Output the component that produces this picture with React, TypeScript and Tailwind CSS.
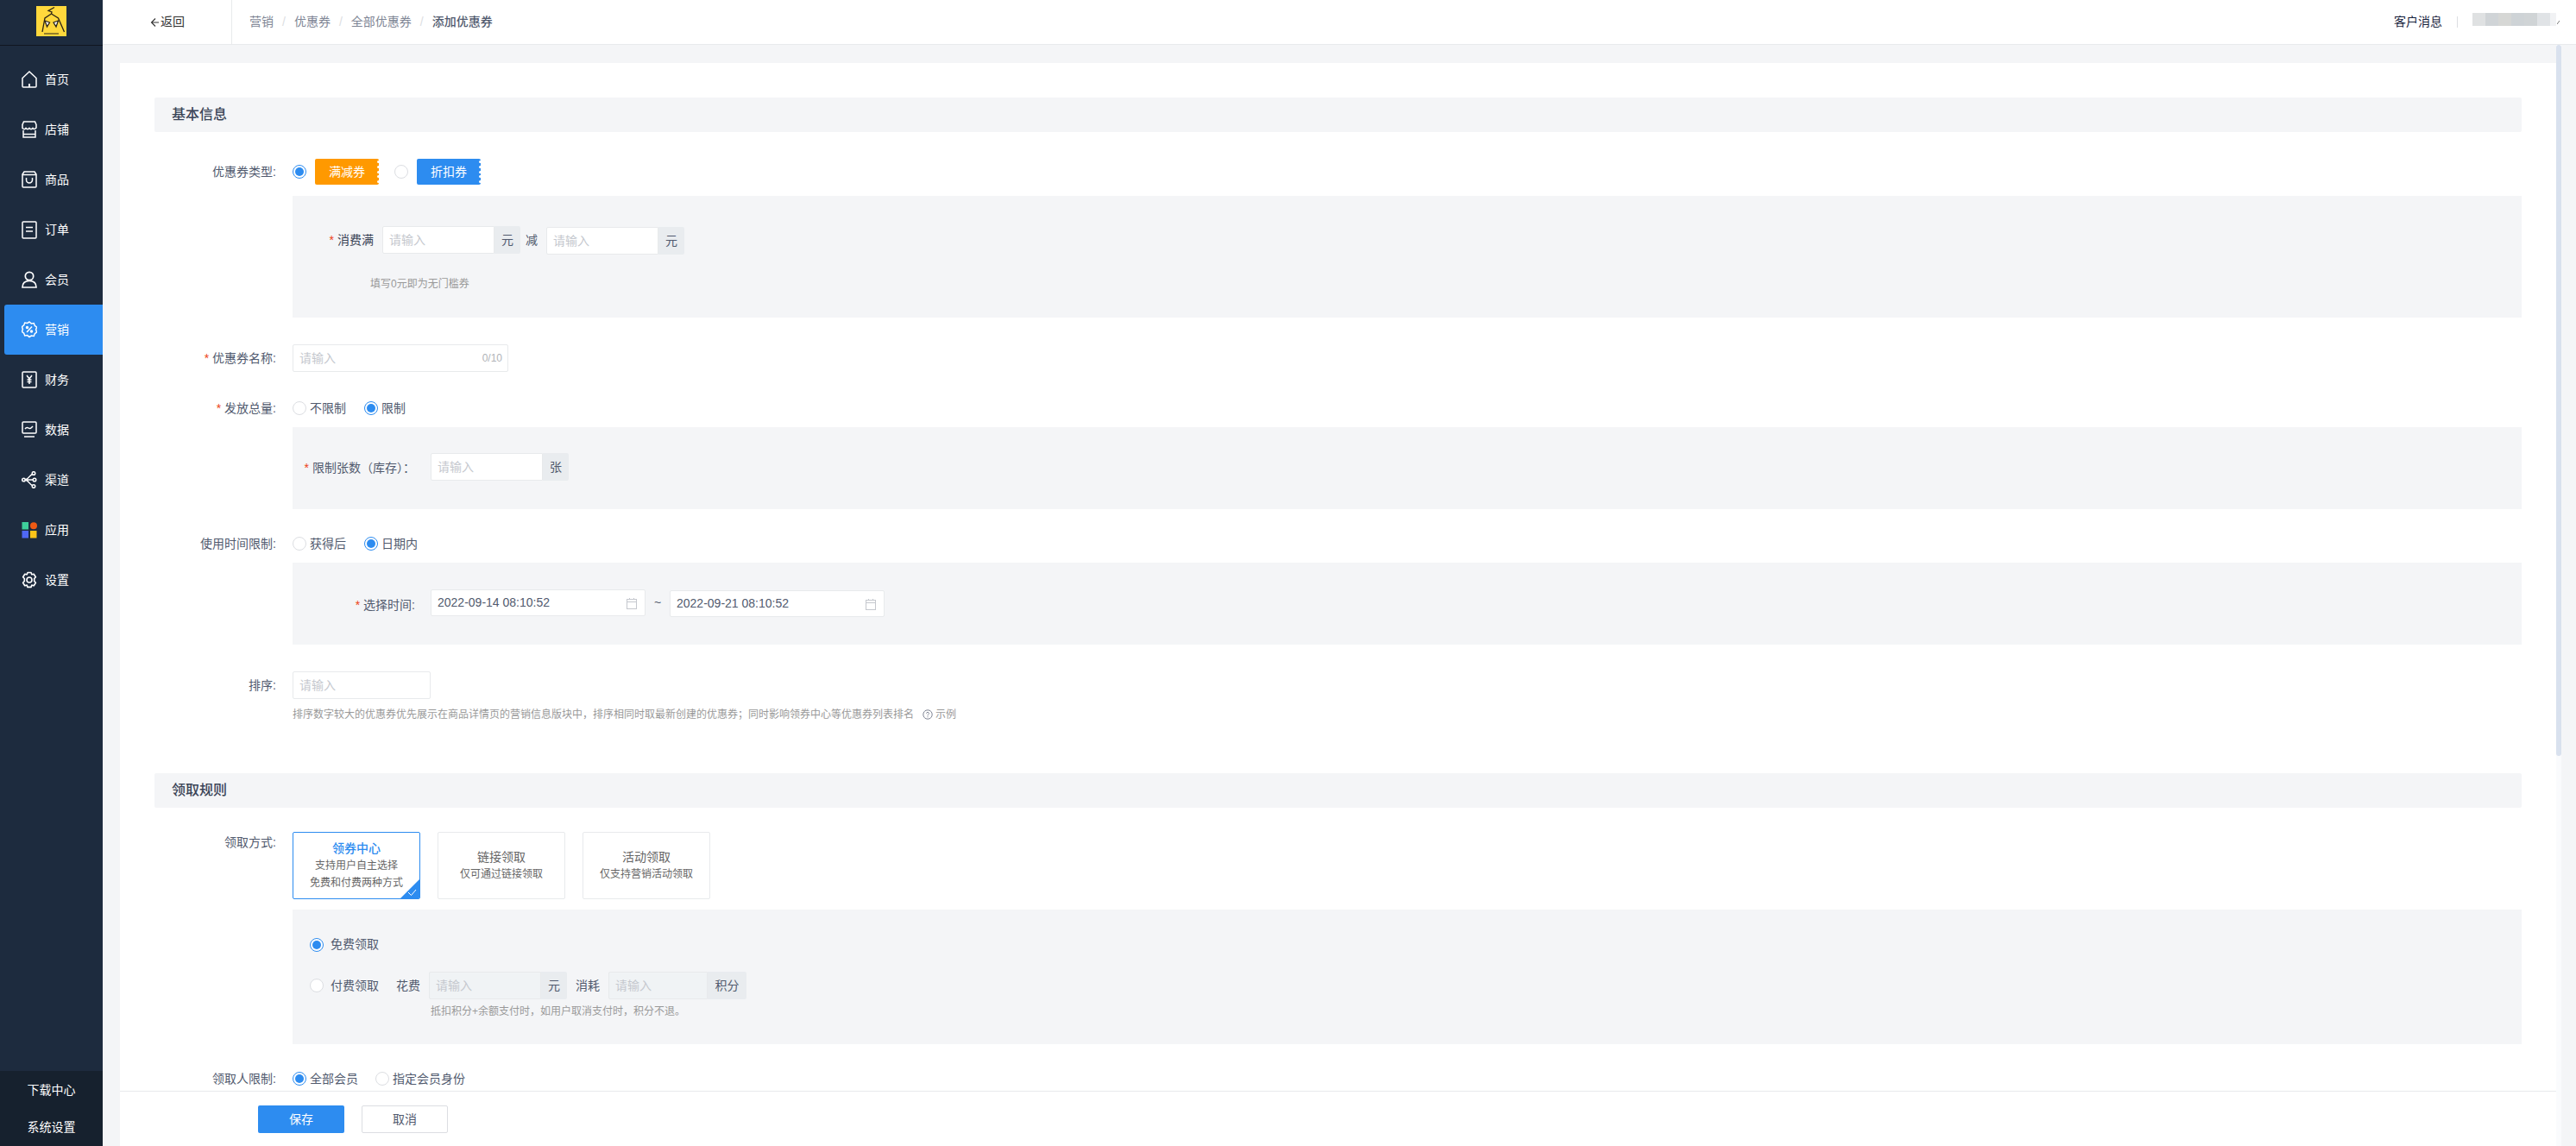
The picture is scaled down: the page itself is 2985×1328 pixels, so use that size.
import type { ReactNode } from 'react';

const font = "font-['Liberation_Sans','Noto_Sans_CJK_SC',sans-serif]";

function HomeIcon() {
  return (
    <svg width="18" height="20" viewBox="0 0 18 20" fill="none" stroke="currentColor" strokeWidth="1.5">
      <path d="M1 8.500 9 1l8 7.500V18a1 1 0 0 1-1 1H2a1 1 0 0 1-1-1z" />
      <path d="M9 15v4" strokeWidth="2" />
    </svg>
  );
}

function ShopIcon() {
  return (
    <svg width="18" height="20" viewBox="0 0 18 20" fill="none" stroke="currentColor" strokeWidth="1.5">
      <path d="M2.500 1h13L17 4.500V8c-1.500 2-3 2-4 .5-1 1.500-3 1.500-4 0-1 1.500-3 1.500-4 0-1 1.500-2.500 1.500-4 0V4.500z" />
      <path d="M2 11v8h14v-8" />
      <path d="M2 15.500h14" />
    </svg>
  );
}

function BagIcon() {
  return (
    <svg width="18" height="20" viewBox="0 0 18 20" fill="none" stroke="currentColor" strokeWidth="1.5">
      <path d="M3 1h12l2 3v14a1 1 0 0 1-1 1H2a1 1 0 0 1-1-1V4z" />
      <path d="M1 4.500h16" />
      <path d="M5.500 8v2.500a3.500 3.500 0 0 0 7 0V8" />
    </svg>
  );
}

function OrderIcon() {
  return (
    <svg width="18" height="21" viewBox="0 0 18 21" fill="none" stroke="currentColor" strokeWidth="1.500">
      <rect x="1" y="1" width="16" height="19" rx="1" />
      <path d="M5 7.500h8M5 12h8" />
    </svg>
  );
}

function UserIcon() {
  return (
    <svg width="18" height="20" viewBox="0 0 18 20" fill="none" stroke="currentColor" strokeWidth="1.700">
      <circle cx="9" cy="6" r="4.700" />
      <path d="M1 19c0-5 3-7.500 8-7.500s8 2.500 8 7.500z" />
    </svg>
  );
}

function PromoIcon() {
  return (
    <svg width="18" height="20" viewBox="0 0 18 20" fill="none" stroke="currentColor" strokeWidth="1.500">
      <path d="M9 1l2.300 1.900 3-.3 1 2.800 2.300 1.800-1 2.800 1 2.800-2.300 1.800-1 2.800-3-.3L9 18.500l-2.300-1.900-3 .3-1-2.800L.4 12.300l1-2.800-1-2.800 2.300-1.800 1-2.800 3 .3z" />
      <path d="M12 6.500l-6 6.500" />
      <circle cx="6.500" cy="7.500" r="1" fill="currentColor" />
      <circle cx="11.500" cy="12" r="1" fill="currentColor" />
    </svg>
  );
}

function FinanceIcon() {
  return (
    <svg width="18" height="20" viewBox="0 0 18 20" fill="none" stroke="currentColor" strokeWidth="1.500">
      <rect x="1" y="1" width="16" height="18" rx="1" />
      <path d="M6 5l3 4 3-4M9 9v6M6.500 10h5M6.500 12.500h5" />
    </svg>
  );
}

function DataIcon() {
  return (
    <svg width="18" height="20" viewBox="0 0 18 20" fill="none" stroke="currentColor" strokeWidth="1.500">
      <rect x="1" y="1" width="16" height="13" rx="1" />
      <path d="M4 9c1.500-2 2.500-2 4-1s2.500 1 5-2" />
      <path d="M3 18h12" />
    </svg>
  );
}

function ChannelIcon() {
  return (
    <svg width="18" height="20" viewBox="0 0 18 20" fill="none" stroke="currentColor" strokeWidth="1.500">
      <circle cx="2.500" cy="10" r="1.800" />
      <circle cx="14" cy="2.500" r="1.800" />
      <circle cx="15" cy="10" r="1.800" />
      <circle cx="14" cy="17.500" r="1.800" />
      <path d="M12.500 3.500C9 5 9 8 4.500 10c4.500 2 4.500 5 8 6.500M4.500 10h8.500" />
    </svg>
  );
}

function AppIcon() {
  return (
    <svg width="18" height="20" viewBox="0 0 18 20">
      <rect x="0.500" y="1" width="7.500" height="8.500" fill="#3ecf9b" />
      <circle cx="14" cy="5.200" r="4" fill="#ee5a14" />
      <rect x="0.500" y="11" width="7.500" height="8.500" fill="#4f68f5" />
      <rect x="10" y="11" width="7.500" height="8.500" fill="#fcc419" />
    </svg>
  );
}

function GearIcon() {
  return (
    <svg width="18" height="20" viewBox="0 0 18 20" fill="none" stroke="currentColor" strokeWidth="1.600">
      <path d="M7 1.500h4l.8 2.300 2.400-.6 2.200 3.500-1.700 1.800v2.900l1.700 1.800-2.200 3.500-2.400-.6-.8 2.300H7l-.8-2.300-2.400.6-2.200-3.500 1.700-1.800V8.500L1.600 6.700l2.200-3.500 2.400.6z" strokeLinejoin="round" />
      <circle cx="9" cy="10" r="3" />
    </svg>
  );
}

function Logo() {
  return (
    <svg width="35" height="35" viewBox="0 0 35 35">
      <rect width="35" height="35" fill="#ffd83c" />
      <g fill="none" stroke="#2b2416" strokeWidth="1.300">
        <path d="M21 1.500 14 5.500l4 1.500-.500 2" />
        <path d="M17.500 9 10 14 7 30" />
        <path d="M17.500 9l8 5 7 16" />
        <path d="M10 17l5.500 2-3 5zM25.500 17l-5.500 2 3 5z" fill="#fff" />
      </g>
      <rect x="9" y="31.500" width="17" height="1" fill="#2b2416" />
    </svg>
  );
}

const navItems: { label: string; icon: ReactNode; active?: boolean }[] = [
  { label: '首页', icon: <HomeIcon /> },
  { label: '店铺', icon: <ShopIcon /> },
  { label: '商品', icon: <BagIcon /> },
  { label: '订单', icon: <OrderIcon /> },
  { label: '会员', icon: <UserIcon /> },
  { label: '营销', icon: <PromoIcon />, active: true },
  { label: '财务', icon: <FinanceIcon /> },
  { label: '数据', icon: <DataIcon /> },
  { label: '渠道', icon: <ChannelIcon /> },
  { label: '应用', icon: <AppIcon /> },
  { label: '设置', icon: <GearIcon /> },
];

function Sidebar() {
  return (
    <aside className="flex h-full w-[119px] shrink-0 flex-col bg-[#1d2b3e] text-white">
      <div className="flex h-[53px] shrink-0 items-start justify-center border-b border-[#10161f] pt-[7px]">
        <Logo />
      </div>
      <nav className="mt-[10px] flex flex-1 flex-col">
        {navItems.map((item) =>
          item.active ? (
            <div key={item.label} className="ml-[5px] flex h-[58px] items-center gap-[9px] rounded-l-[3px] bg-[#2d8cf0] pl-[20px] text-[14px]">
              {item.icon}
              <span>{item.label}</span>
            </div>
          ) : (
            <div key={item.label} className="flex h-[58px] items-center gap-[9px] pl-[25px] text-[14px]">
              {item.icon}
              <span>{item.label}</span>
            </div>
          )
        )}
      </nav>
      <div className="flex h-[87px] shrink-0 flex-col items-center bg-[#16212e] pt-[1px] text-[14px]">
        <div className="flex h-[44px] items-center">下载中心</div>
        <div className="flex h-[44px] items-center">系统设置</div>
      </div>
    </aside>
  );
}

function Slash() {
  return <span className="mx-[10px] text-[#dcdee2]">/</span>;
}

function Header() {
  return (
    <header className="flex h-[52px] shrink-0 items-center border-b border-[#e8eaec] bg-white text-[14px]">
      <div className="flex h-full w-[150px] items-center justify-center border-r border-[#e8eaec] pl-[1px] text-[#333]">
        <svg width="11" height="12" viewBox="0 0 11 12" fill="none" stroke="#333" strokeWidth="1.100" className="mr-[1px]">
          <path d="M6 1.500 1.500 6 6 10.500M1.500 6H10" />
        </svg>
        <span>返回</span>
      </div>
      <div className="flex items-center pl-[20px] text-[#808695]">
        <span>营销</span>
        <Slash />
        <span>优惠券</span>
        <Slash />
        <span>全部优惠券</span>
        <Slash />
        <span className="font-medium text-[#515a6e]">添加优惠券</span>
      </div>
      <div className="ml-auto flex items-center pr-[19px]">
        <span className="text-[#17233d]">客户消息</span>
        <span className="mx-[17px] h-[13px] w-px bg-[#dcdee2]" />
        <div className="flex h-[15px] w-[97px] -translate-y-[3px]">
          <span className="flex-1 bg-[#dfe1e2]" />
          <span className="flex-1 bg-[#d0d4d7]" />
          <span className="flex-1 bg-[#d6d7d5]" />
          <span className="flex-1 bg-[#ced3d6]" />
          <span className="flex-1 bg-[#d0d4d6]" />
          <span className="flex-1 bg-[#e0e3e6]" />
          <span className="w-[7px] bg-[#f1f2f4]" />
        </div>
        <svg width="3" height="4" viewBox="0 0 3 4" className="ml-[1px]">
          <path d="M0 4 3 0" stroke="#777" />
        </svg>
      </div>
    </header>
  );
}

function SectionTitle({ children, className }: { children: ReactNode; className: string }) {
  return (
    <div className={`flex h-10 items-center rounded-[2px] bg-[#f4f5f7] pl-5 text-[16px] font-medium text-[#3a4456] ${className}`}>
      {children}
    </div>
  );
}

function Star() {
  return <span className="mr-[4px] text-[14px] text-[#ed4014]">*</span>;
}

function Row({ label, required, className, children }: { label: string; required?: boolean; className: string; children: ReactNode }) {
  return (
    <div className={`flex items-center ${className}`}>
      <div className="w-[141px] shrink-0 text-right text-[14px] text-[#515a6e]">
        {required && <Star />}
        {label}:
      </div>
      <div className="ml-[19px] flex items-center">{children}</div>
    </div>
  );
}

function Radio({ checked, label, gap = 'ml-1', className = '' }: { checked?: boolean; label?: string; gap?: string; className?: string }) {
  return (
    <span className={`flex items-center text-[14px] text-[#515a6e] ${className}`}>
      {checked ? (
        <span className="flex h-4 w-4 items-center justify-center rounded-full border border-[#2d8cf0] bg-white">
          <span className="h-[10px] w-[10px] rounded-full bg-[#2d8cf0]" />
        </span>
      ) : (
        <span className="h-4 w-4 rounded-full border border-[#dcdee2] bg-white" />
      )}
      {label && <span className={gap}>{label}</span>}
    </span>
  );
}

function Ticket({ label, color }: { label: string; color: string }) {
  return (
    <span className={`relative flex h-[30px] w-[74px] items-center justify-center rounded-[2px] text-[14px] text-white ${color}`}>
      {label}
      <span className="absolute top-[2px] right-[-1px] flex h-[26px] flex-col justify-between">
        <i className="h-[3px] w-[3px] rounded-full bg-white" />
        <i className="h-[3px] w-[3px] rounded-full bg-white" />
        <i className="h-[3px] w-[3px] rounded-full bg-white" />
        <i className="h-[3px] w-[3px] rounded-full bg-white" />
        <i className="h-[3px] w-[3px] rounded-full bg-white" />
      </span>
    </span>
  );
}

function AddonInput({ unit, disabled, inputWidth, addonWidth, className = '' }: { unit: string; disabled?: boolean; inputWidth: string; addonWidth: string; className?: string }) {
  return (
    <span className={`flex h-8 ${className}`}>
      <input
        disabled={disabled}
        placeholder="请输入"
        className={`h-8 rounded-l-[2px] border border-[#e8eaec] px-[7px] text-[14px] outline-none placeholder:text-[#c5c8ce] ${inputWidth} ${disabled ? 'bg-[#f0f3f5]' : 'bg-white'}`}
      />
      <span className={`flex items-center justify-center rounded-r-[2px] bg-[#e9ecef] text-[14px] text-[#515a6e] ${addonWidth}`}>{unit}</span>
    </span>
  );
}

function DateInput({ value, className = '' }: { value: string; className?: string }) {
  return (
    <span className={`flex h-[31px] w-[249px] items-center justify-between rounded-[2px] border border-[#e8eaec] bg-white pr-[8px] pl-[7px] text-[14px] text-[#515a6e] ${className}`}>
      {value}
      <svg width="14" height="14" viewBox="0 0 14 14" fill="none" stroke="#c5c8ce" strokeWidth="1">
        <rect x="1.500" y="2.500" width="11" height="11" />
        <path d="M1.500 5.500h11M4.500 1v2M9.500 1v2" />
      </svg>
    </span>
  );
}

function WayCard({ title, lines, active }: { title: string; lines: string[]; active?: boolean }) {
  return (
    <div className={`relative flex h-[78px] w-[148px] flex-col items-center justify-center overflow-hidden rounded-[2px] border ${active ? 'border-[#2d8cf0]' : 'border-[#e8eaec]'}`}>
      <div className={`text-[14px] leading-5 ${active ? 'font-medium text-[#2d8cf0]' : 'text-[#666]'}`}>{title}</div>
      {lines.map((line) => (
        <div key={line} className="text-[12px] leading-5 text-[#666]">
          {line}
        </div>
      ))}
      {active && (
        <svg width="22" height="22" viewBox="0 0 22 22" className="absolute right-0 bottom-0">
          <path d="M22 0v22H0z" fill="#2d8cf0" />
          <path d="M9 15l3.500 3.500L18 12" fill="none" stroke="#fff" strokeWidth="1" />
        </svg>
      )}
    </div>
  );
}

function PlainInput({ width, count }: { width: string; count?: string }) {
  return (
    <span className={`relative flex h-8 ${width}`}>
      <input placeholder="请输入" className="h-8 w-full rounded-[2px] border border-[#e8eaec] bg-white px-[7px] text-[14px] outline-none placeholder:text-[#c5c8ce]" />
      {count && <span className="absolute top-[7px] right-[7px] text-[12px] text-[#b0b3b8]">{count}</span>}
    </span>
  );
}

function CouponForm() {
  return (
    <div className="h-full overflow-hidden px-10 pt-10">
      <SectionTitle className="">基本信息</SectionTitle>

      <Row label="优惠券类型" className="mt-[31px] h-[30px]">
        <Radio checked />
        <span className="ml-[10px]">
          <Ticket label="满减券" color="bg-[#ff9900]" />
        </span>
        <Radio className="ml-[18px]" />
        <span className="ml-[10px]">
          <Ticket label="折扣券" color="bg-[#2d8cf0]" />
        </span>
      </Row>
      <div className="mt-[13px] ml-[160px] h-[141px] bg-[#f4f5f7] pt-[35px]">
        <div className="flex items-center">
          <div className="w-[94px] shrink-0 text-right text-[14px] text-[#3a4456]">
            <Star />
            消费满
          </div>
          <AddonInput unit="元" inputWidth="w-[130px]" addonWidth="w-[30px]" className="ml-[10px]" />
          <span className="ml-[6px] text-[14px] text-[#515a6e]">减</span>
          <AddonInput unit="元" inputWidth="w-[130px]" addonWidth="w-[30px]" className="ml-[10px] translate-y-[1px]" />
        </div>
        <div className="mt-[25px] ml-[90px] text-[12px] leading-[20px] text-[#999]">填写0元即为无门槛券</div>
      </div>

      <Row label="优惠券名称" required className="mt-[31px] h-8">
        <PlainInput width="w-[250px]" count="0/10" />
      </Row>

      <Row label="发放总量" required className="mt-[26px] h-8">
        <Radio label="不限制" />
        <Radio checked label="限制" className="ml-[21px]" />
      </Row>
      <div className="mt-[6px] ml-[160px] flex h-[95px] items-start bg-[#f4f5f7] pt-[30px]">
        <div className="w-[142px] shrink-0 pt-[6px] text-right text-[14px] leading-[22px] text-[#515a6e]">
          <Star />
          限制张数（库存）：
        </div>
        <AddonInput unit="张" inputWidth="w-[130px]" addonWidth="w-[30px]" className="ml-[18px]" />
      </div>

      <Row label="使用时间限制" className="mt-[24px] h-8">
        <Radio label="获得后" />
        <Radio checked label="日期内" className="ml-[21px]" />
      </Row>
      <div className="mt-[6px] ml-[160px] flex h-[95px] items-start bg-[#f4f5f7] pt-[31px]">
        <div className="w-[142px] shrink-0 pt-[7px] text-right text-[14px] leading-[22px] text-[#515a6e]">
          <Star />
          选择时间:
        </div>
        <DateInput value="2022-09-14 08:10:52" className="ml-[18px]" />
        <span className="flex h-[31px] w-[28px] items-center justify-center text-[14px] text-[#515a6e]">~</span>
        <DateInput value="2022-09-21 08:10:52" className="translate-y-[1px]" />
      </div>

      <Row label="排序" className="mt-[31px] h-8">
        <PlainInput width="w-[160px]" />
      </Row>
      <div className="mt-[8px] ml-[160px] flex h-5 items-center text-[12px] text-[#999]">
        排序数字较大的优惠券优先展示在商品详情页的营销信息版块中，排序相同时取最新创建的优惠券；同时影响领券中心等优惠券列表排名
        <svg width="12" height="12" viewBox="0 0 12 12" fill="none" stroke="#808695" className="mr-[3px] ml-[10px]">
          <circle cx="6" cy="6" r="5.200" />
          <path d="M4.500 4.700C4.500 3 7.500 3 7.500 4.700 7.500 6 6 5.800 6 7.300M6 8.300v1" />
        </svg>
        示例
      </div>

      <SectionTitle className="mt-[58px]">领取规则</SectionTitle>

      <div className="mt-[28px] flex">
        <div className="w-[141px] shrink-0 pt-[2px] text-right text-[14px] leading-[20px] text-[#515a6e]">领取方式:</div>
        <div className="ml-[19px] flex gap-5">
          <WayCard title="领券中心" lines={['支持用户自主选择', '免费和付费两种方式']} active />
          <WayCard title="链接领取" lines={['仅可通过链接领取']} />
          <WayCard title="活动领取" lines={['仅支持营销活动领取']} />
        </div>
      </div>
      <div className="mt-[12px] ml-[160px] h-[156px] bg-[#f4f5f7] pt-[30px] pl-[20px]">
        <Radio checked label="免费领取" gap="ml-2" />
        <div className="mt-[21px] flex items-center">
          <Radio label="付费领取" gap="ml-2" />
          <span className="ml-[20px] text-[14px] text-[#515a6e]">花费</span>
          <AddonInput unit="元" disabled inputWidth="w-[130px]" addonWidth="w-[30px]" className="ml-[10px]" />
          <span className="ml-[10px] text-[14px] text-[#515a6e]">消耗</span>
          <AddonInput unit="积分" disabled inputWidth="w-[115px]" addonWidth="w-[45px]" className="ml-[10px]" />
        </div>
        <div className="mt-[5px] ml-[140px] text-[12px] leading-[18px] text-[#999]">抵扣积分+余额支付时，如用户取消支付时，积分不退。</div>
      </div>

      <Row label="领取人限制" className="mt-[24px] h-8">
        <Radio checked label="全部会员" />
        <Radio label="指定会员身份" className="ml-[20px]" />
      </Row>
    </div>
  );
}

export default function App() {
  return (
    <div className={`flex h-screen w-full overflow-hidden bg-[#f4f5f7] ${font}`}>
      <Sidebar />
      <main className="flex min-w-0 flex-1 flex-col">
        <Header />
        <div className="flex min-h-0 flex-1 pt-[21px] pl-5">
          <div className="flex w-[2823px] shrink-0 flex-col bg-white">
            <div className="min-h-0 flex-1">
              <CouponForm />
            </div>
            <div className="flex h-[64px] shrink-0 items-start gap-5 border-t border-[#e8eaec] bg-white pt-[16px] pl-[160px]">
              <button className="h-8 w-[100px] rounded-[2px] bg-[#2d8cf0] text-[14px] text-white">保存</button>
              <button className="h-8 w-[100px] rounded-[2px] border border-[#dcdee2] bg-white text-[14px] text-[#515a6e]">取消</button>
            </div>
          </div>
          <div className="-mt-[21px] h-[calc(100%+21px)] w-[6px] bg-[#fafbfd]">
            <div className="h-[824px] rounded-t-[3px] rounded-b-[3px] bg-[#d9e1ee]" />
          </div>
        </div>
      </main>
    </div>
  );
}
